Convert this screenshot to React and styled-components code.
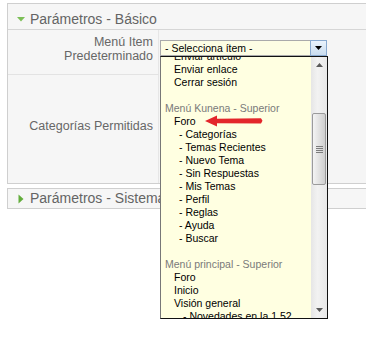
import React from 'react'
import styled, { createGlobalStyle } from 'styled-components'

const GlobalStyle = createGlobalStyle`
  html, body {
    margin: 0;
    padding: 0;
    background: #fff;
    overflow: hidden;
  }
  body {
    font-family: "Liberation Sans", Arial, sans-serif;
  }
`;

const Page = styled.div`
  width: 366px;
  height: 346px;
  padding: 3px 0 0 7px;
  box-sizing: border-box;
  overflow: hidden;
`;

const Panel = styled.section`
  width: 380px;
  border: 1px solid #cfcfcf;
  margin-bottom: 4px;
  background: #f5f5f5;
`;

const PanelTitle = styled.h3`
  margin: 0;
  display: flex;
  align-items: center;
  gap: 4px;
  height: ${p => (p.$open ? '26px' : '19px')};
  padding: ${p => (p.$open ? '6px 0 1px 8px' : '0 0 0 8px')};
  box-sizing: border-box;
  background: #f6f6f6;
  border-bottom: ${p => (p.$open ? '1px solid #d6d6d6' : 'none')};
  font-size: 14px;
  font-weight: normal;
  line-height: 19px;
  color: #646464;
  cursor: pointer;
`;

const ParamRow = styled.div`
  display: flex;
`;

const ParamKey = styled.div`
  width: 151px;
  box-sizing: border-box;
  height: ${p => p.$h}px;
  display: flex;
  flex-direction: column;
  justify-content: center;
  align-items: flex-end;
  padding: 2px 5px 9px 0;
  background: #f6f6f6;
  border-right: 1px solid #e6e6e6;
  border-bottom: ${p => (p.$last ? 'none' : '1px solid #e3e3e3')};
  font-size: 12.5px;
  line-height: 14px;
  color: #676767;
  text-align: right;
`;

const ParamValue = styled.div`
  flex: 1;
  padding: 10px 0 0 1px;
`;

const SelectWrap = styled.div`
  position: relative;
  width: 167px;
`;

const SelectBox = styled.div`
  display: flex;
  height: 16px;
  box-sizing: border-box;
  border: 1px solid #a9a9ab;
  border-right: none;
  background: #fdfde4;
  font-size: 10.5px;
  color: #000;
`;

const SelectText = styled.span`
  flex: 1;
  padding-left: 4px;
  line-height: 14px;
`;

const SelectButton = styled.span`
  width: 17px;
  margin: -1px 0;
  box-sizing: border-box;
  border: 1px solid #88a9cf;
  background: linear-gradient(#eaf3fc, #c9dcef);
  display: flex;
  align-items: center;
  justify-content: center;
`;

const DropList = styled.div`
  position: absolute;
  top: 100%;
  left: 0;
  z-index: 5;
  width: 168px;
  height: 263px;
  box-sizing: border-box;
  border: 1px solid #111;
  border-left-color: #777;
  background: #ffffe1;
  display: flex;
`;

const Options = styled.div`
  flex: 1;
  overflow: hidden;
`;

const OptionsInner = styled.div`
  margin-top: -7px;
`;

const indents = { group: 4, item: 13, sub: 18, subsub: 22 };

const Option = styled.div`
  height: 13px;
  line-height: 13px;
  white-space: nowrap;
  font-size: 10.5px;
  padding-left: ${p => indents[p.$level] || 0}px;
  color: ${p => (p.$level === 'group' ? '#7a7a7a' : '#000')};
`;

const Pointer = styled.svg`
  vertical-align: middle;
  margin: -2px 0 0 9px;
`;

const ScrollTrack = styled.div`
  width: 16px;
  display: flex;
  flex-direction: column;
  background: linear-gradient(90deg, #e6e6e6, #f2f2f2 40%, #e8e8e8);
`;

const ScrollArrow = styled.div`
  height: 16px;
  display: flex;
  align-items: center;
  justify-content: center;
`;

const ScrollGap = styled.div`
  height: ${p => p.$h}px;
`;

const ScrollThumb = styled.div`
  height: 72px;
  margin: 0 1px;
  box-sizing: border-box;
  border: 1px solid #9b9b9b;
  border-radius: 2px;
  background: linear-gradient(90deg, #f4f4f4, #dedede 60%, #cfcfcf);
  display: flex;
  align-items: center;
  justify-content: center;
`;

const Triangle = ({ open }) => (
  <svg width="10" height="10" viewBox="0 0 10 10">
    {open
      ? <polygon points="1,3 9,3 5,7.5" fill="#7cbf57" />
      : <polygon points="2.5,0.5 7.5,5 2.5,9.5" fill="#62ad3c" />}
  </svg>
);

const options = [
  ['item', 'Enviar artículo'],
  ['item', 'Enviar enlace'],
  ['item', 'Cerrar sesión'],
  ['blank', ''],
  ['group', 'Menú Kunena - Superior'],
  ['item', 'Foro', true],
  ['sub', '- Categorías'],
  ['sub', '- Temas Recientes'],
  ['sub', '- Nuevo Tema'],
  ['sub', '- Sin Respuestas'],
  ['sub', '- Mis Temas'],
  ['sub', '- Perfil'],
  ['sub', '- Reglas'],
  ['sub', '- Ayuda'],
  ['sub', '- Buscar'],
  ['blank', ''],
  ['group', 'Menú principal - Superior'],
  ['item', 'Foro'],
  ['item', 'Inicio'],
  ['item', 'Visión general'],
  ['subsub', '- Novedades en la 1.52'],
];

const RedArrow = () => (
  <Pointer width="58" height="12" viewBox="0 0 58 12">
    <polygon points="0,6 12,0.5 12,3.8 56,3.2 57.5,5.8 56,8.6 12,8.2 12,11.5" fill="#e3262b" />
  </Pointer>
);

const Scrollbar = () => (
  <ScrollTrack>
    <ScrollArrow>
      <svg width="7" height="4" viewBox="0 0 7 4"><polygon points="0,4 7,4 3.5,0" fill="#5a5a5a" /></svg>
    </ScrollArrow>
    <ScrollGap $h={40} />
    <ScrollThumb>
      <svg width="7" height="7" viewBox="0 0 7 7">
        {[0.5, 2.5, 4.5, 6.5].map(y => <line key={y} x1="0" x2="7" y1={y} y2={y} stroke="#7c7c7c" strokeWidth="1" />)}
      </svg>
    </ScrollThumb>
    <ScrollGap $h={117} />
    <ScrollArrow>
      <svg width="7" height="4" viewBox="0 0 7 4"><polygon points="0,0 7,0 3.5,4" fill="#5a5a5a" /></svg>
    </ScrollArrow>
  </ScrollTrack>
);

const MenuSelect = () => (
  <SelectWrap>
    <SelectBox>
      <SelectText>- Selecciona ítem -</SelectText>
      <SelectButton>
        <svg width="7" height="4" viewBox="0 0 7 4"><polygon points="0,0 7,0 3.5,4" fill="#000" /></svg>
      </SelectButton>
    </SelectBox>
    <DropList>
      <Options>
        <OptionsInner>
          {options.map(([level, text, marked], i) => (
            <Option key={i} $level={level}>
              {text}
              {marked && <RedArrow />}
            </Option>
          ))}
        </OptionsInner>
      </Options>
      <Scrollbar />
    </DropList>
  </SelectWrap>
);

const App = () => (
  <Page>
    <GlobalStyle />
    <Panel>
      <PanelTitle $open>
        <Triangle open />
        Parámetros - Básico
      </PanelTitle>
      <ParamRow>
        <ParamKey $h={45}>
          <span>Menú Item</span>
          <span>Predeterminado</span>
        </ParamKey>
        <ParamValue>
          <MenuSelect />
        </ParamValue>
      </ParamRow>
      <ParamRow>
        <ParamKey $h={108} $last>Categorías Permitidas</ParamKey>
        <ParamValue />
      </ParamRow>
    </Panel>
    <Panel>
      <PanelTitle>
        <Triangle />
        Parámetros - Sistema
      </PanelTitle>
    </Panel>
  </Page>
)

export default App
